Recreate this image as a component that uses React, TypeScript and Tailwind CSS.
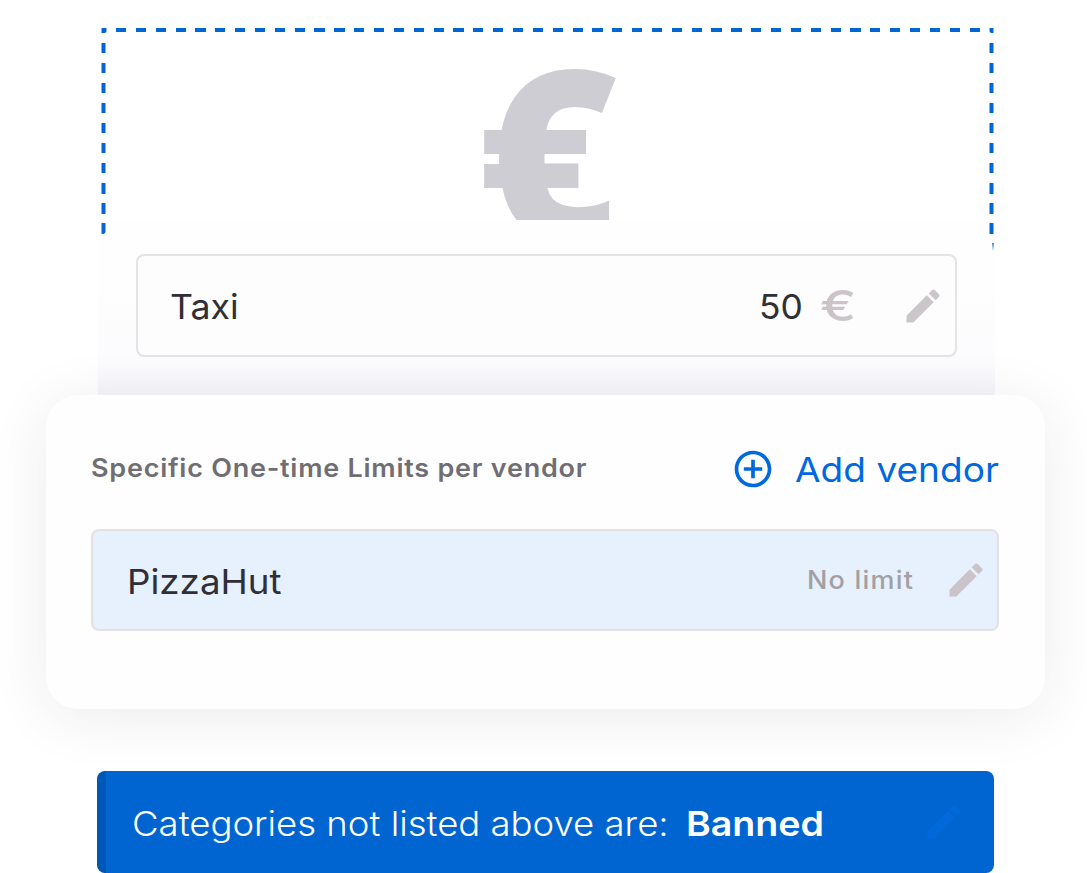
import React from "react";
import { MdEdit, MdAddCircleOutline } from "react-icons/md";

function UploadArea() {
  return (
    <div className="relative ml-[98px] h-[220px] w-[897px]">
      <div className="absolute left-[3px] top-[28px] h-[5px] w-[5px] translate-x-[0.5px] rounded-br-[2px] bg-[#0066d6]" />
      <div className="absolute left-[18px] top-[28px] h-[4px] w-[864px] bg-[repeating-linear-gradient(90deg,#0066d6_0px,#0066d6_10.2px,transparent_10.2px,transparent_19.85px)]" />
      <div className="absolute left-[891px] top-[28px] h-[5px] w-[4px] translate-x-[0.5px] rounded-bl-[2px] bg-[#0066d6]" />
      <div className="absolute left-[3px] top-[43px] h-[191px] w-[4px] translate-x-[0.5px] rounded-br-[3px] bg-[repeating-linear-gradient(180deg,#0066d6_0px,#0066d6_10.2px,transparent_10.2px,transparent_20.05px)]" />
      <div className="absolute left-[891px] top-[43px] h-[191px] w-[4px] translate-x-[0.5px] bg-[repeating-linear-gradient(180deg,#0066d6_0px,#0066d6_10.2px,transparent_10.2px,transparent_20.05px)]" />
      <div className="absolute left-[894px] top-[243px] h-[8px] w-[2px] bg-linear-to-b from-[#4a86dc] to-transparent" />
      <div className="flex h-[220px] justify-center overflow-hidden pl-[3px]">
        <span className="block font-['Open_Sans',sans-serif] text-[240px] font-extrabold leading-[300px] text-[#cecdd3]">€</span>
      </div>
    </div>
  );
}

function TaxiRow() {
  return (
    <div className="ml-[98px] h-[175px] w-[897px] rounded-t-[28px] bg-linear-to-b from-[#fefefe] from-40% via-[#fcfbfd] via-80% to-[#f6f5fa] px-[38px] pt-[34px]">
      <div className="flex h-[103px] w-[821px] items-center rounded-lg border-2 border-[#e6e3e6] bg-[#fefdfe] pl-[32px] pr-[10px]">
        <span className="origin-left scale-x-[1.05] pt-[2px] text-[34px] text-[#302f34]">Taxi</span>
        <span className="ml-auto w-[44px] origin-left scale-x-[1.04] pt-[2px] text-[34px] text-[#302f34]">50</span>
        <span className="ml-[17px] w-[36px] origin-left scale-x-[1.26] text-[43px] font-medium leading-none text-[#cbc5ca]">€</span>
        <MdEdit className="ml-[45px] size-[44px] text-[#cbc6ca]" />
      </div>
    </div>
  );
}

function VendorCard() {
  return (
    <div className="relative ml-[46px] h-[314px] w-[999px] rounded-[32px] bg-[#fefefe] px-[45px] pt-[44px] shadow-[0_8px_60px_rgba(30,30,50,0.085)]">
      <div className="flex h-[60px] items-center whitespace-nowrap">
        <span className="origin-left scale-x-[1.08] text-[25px] font-semibold tracking-[0.7px] text-[#706e73]">Specific One-time Limits per vendor</span>
        <MdAddCircleOutline className="ml-auto size-[44px] text-[#0069e0]" />
        <span className="ml-[20px] w-[205px] origin-left scale-x-[1.09] text-[34px] text-[#0069e0]">Add vendor</span>
      </div>
      <div className="mt-[30px] flex h-[102px] w-[908px] items-center rounded-lg border-2 border-[#e6e0e5] bg-[#e7f1fe] pl-[34px] pr-[9px]">
        <span className="origin-left scale-x-[1.08] pt-[2px] text-[34px] text-[#302f38]">PizzaHut</span>
        <span className="ml-auto w-[108px] origin-left scale-x-[1.08] whitespace-nowrap pt-[2px] text-[25px] font-[450] tracking-[1.1px] text-[#a3a0a3]">No limit</span>
        <MdEdit className="ml-[29px] size-[44px] text-[#cbc3c9]" />
      </div>
    </div>
  );
}

function BannedBar() {
  return (
    <div className="relative ml-[97px] mt-[62px] flex h-[102px] w-[897px] items-center overflow-hidden whitespace-nowrap rounded-lg border-l-[9px] border-[#0057b5] bg-[#0065d0] pl-[26px] pr-[28px] text-white">
      <span className="w-[536px] origin-left scale-x-[1.074] pt-[2px] text-[34px] font-light">Categories not listed above are:</span>
      <span className="ml-[18px] w-[140px] origin-left scale-x-[1.105] pt-[2px] text-[34px] font-semibold">Banned</span>
      <MdEdit className="ml-auto size-[44px] text-[#006ada]" />
    </div>
  );
}

export default function App() {
  return (
    <main className="h-[873px] w-[1087px] overflow-hidden bg-white font-['Inter','Liberation_Sans',sans-serif]">
      <UploadArea />
      <TaxiRow />
      <VendorCard />
      <BannedBar />
    </main>
  );
}
